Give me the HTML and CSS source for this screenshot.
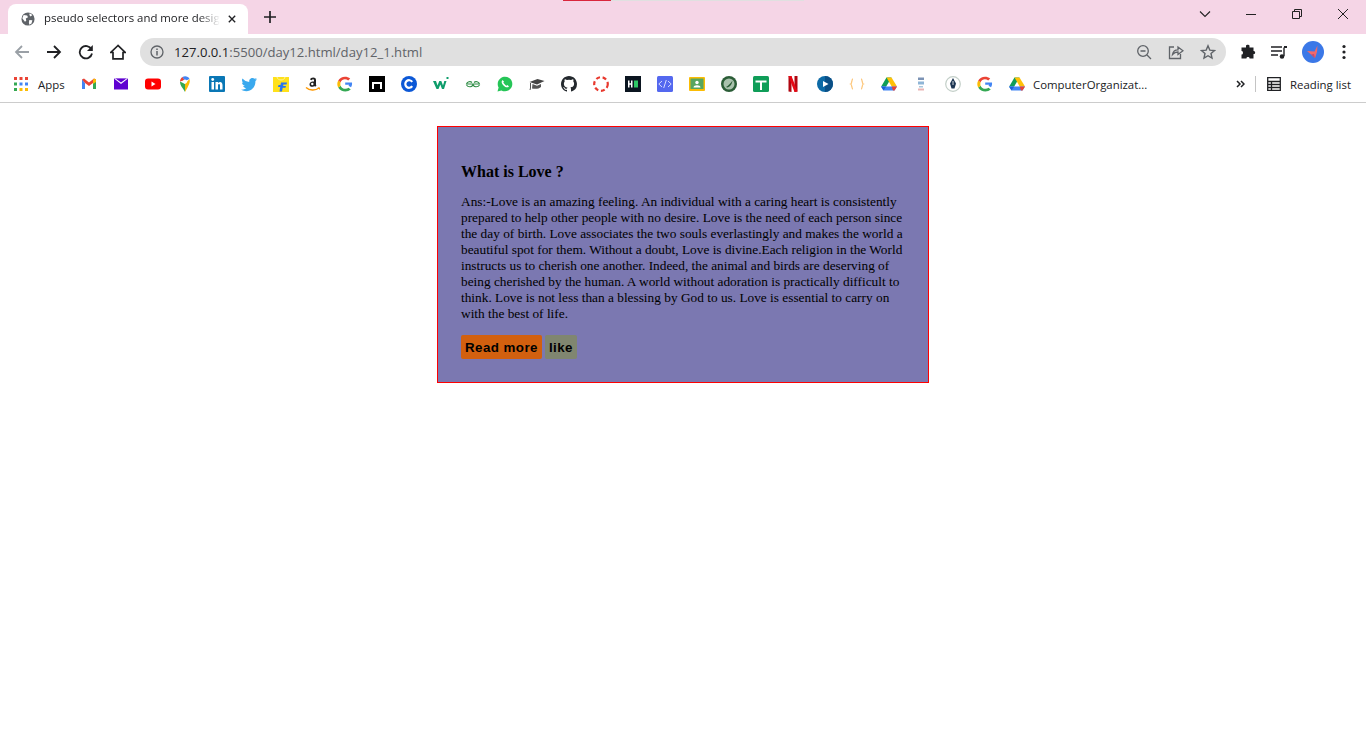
FILE: index.html
```html
<!DOCTYPE html>
<html lang="en">
<head>
<meta charset="UTF-8" />
<meta name="viewport" content="width=device-width, initial-scale=1" />
<title>pseudo selectors and more design</title>
<link rel="stylesheet" href="styles.css">
</head>
<body>
  <div class="browser">
    <div class="tabstrip">
      <span class="load-red"></span><span class="load-gray"></span>
      <div class="tab">
        <svg class="tab-globe" viewBox="0 0 16 16"><circle cx="8" cy="8" r="7.500" fill="#5f6368"/><path d="M3 3.500 7 4 8 6 5.500 7.500 6 10 4.500 11 1.500 7ZM9.500 9 13 9.500 12 13 9.500 14.500 9 12ZM10 1.500 13 3.500 11 5 9.500 3.500Z" fill="#fff"/></svg>
        <span class="tab-title">pseudo selectors and more desig</span>
        <svg class="tab-close" viewBox="0 0 10 10"><path d="M1 1 9 9M9 1 1 9" stroke="#202124" stroke-width="1.700"/></svg>
      </div>
      <svg class="new-tab" viewBox="0 0 12 12"><path d="M6 0V12M0 6H12" stroke="#202124" stroke-width="1.700"/></svg>
      <div class="window-controls">
        <svg class="win-chevron" viewBox="0 0 12 7"><path d="M1 .5 6 5.500 11 .5" fill="none" stroke="#222" stroke-width="1.100"/></svg>
        <svg class="win-btn" viewBox="0 0 12 12"><path d="M1 6.500H11" stroke="#222" stroke-width="1"/></svg>
        <svg class="win-btn" viewBox="0 0 12 12"><path d="M1.500 3.500H8.500V10.500H1.500ZM3.500 3.500V1.500H10.500V8.500H8.500" fill="none" stroke="#222" stroke-width="1"/></svg>
        <svg class="win-btn" viewBox="0 0 12 12"><path d="M1 1 11 11M11 1 1 11" stroke="#222" stroke-width="1"/></svg>
      </div>
    </div>

    <div class="toolbar">
      <svg class="tool-icon" viewBox="0 0 16 16"><path d="M15 8H2M8 2 2 8 8 14" fill="none" stroke="#9aa0a6" stroke-width="1.800"/></svg>
      <svg class="tool-icon" viewBox="0 0 16 16"><path d="M1 8H14M8 2 14 8 8 14" fill="none" stroke="#202124" stroke-width="1.800"/></svg>
      <svg class="tool-icon" viewBox="0 0 16 16"><path d="M13.500 5.500A6.200 6.200 0 1 0 14 9.500" fill="none" stroke="#202124" stroke-width="1.800"/><path d="M14.800 1V7H9Z" fill="#202124"/></svg>
      <svg class="tool-icon" viewBox="0 0 16 16"><path d="M8 1.500 .8 8.500H3V14.800H13V8.500H15.200Z" fill="none" stroke="#202124" stroke-width="1.700"/></svg>
      <div class="omnibox">
        <svg class="omni-info" viewBox="0 0 14 14"><circle cx="7" cy="7" r="6" fill="none" stroke="#5f6368" stroke-width="1.300"/><path d="M7 6V10.500M7 3.500V5" stroke="#5f6368" stroke-width="1.500"/></svg>
        <span class="url"><span class="url-host">127.0.0.1</span>:5500/day12.html/day12_1.html</span>
        <svg class="omni-icon" viewBox="0 0 16 16"><circle cx="7" cy="7" r="5.300" fill="none" stroke="#5f6368" stroke-width="1.300"/><path d="M4.500 7H9.500M11 11 15 15" stroke="#5f6368" stroke-width="1.300"/></svg>
        <svg class="omni-icon" viewBox="0 0 16 16"><path d="M6 3H1.500V14.500H12.500V10" fill="none" stroke="#5f6368" stroke-width="1.300"/><path d="M4.500 10.500C5 7.500 7 5.800 10 5.800V3L15 6.800 10 10.500V8C8 8 6 8.800 4.500 10.500Z" fill="none" stroke="#5f6368" stroke-width="1.300"/></svg>
        <svg class="omni-icon" viewBox="0 0 16 16"><path d="M8 1.800 9.800 6.100 14.500 6.500 11 9.500 12 14.100 8 11.700 4 14.100 5 9.500 1.500 6.500 6.200 6.100Z" fill="none" stroke="#5f6368" stroke-width="1.400"/></svg>
      </div>
      <div class="toolbar-right">
        <svg class="tool-icon" viewBox="0 0 16 16"><path d="M6 1.500C6.500 .5 9 .5 9.500 1.500V3.500H13.500V7C15.500 6.500 16 10.500 13.500 10V14.500H9.500C10 12.500 6 12.500 6.500 14.500H1.500V10.500C3.500 11 3.500 6.500 1.500 7V3.500H6Z" fill="#202124"/></svg>
        <svg class="tool-icon" viewBox="0 0 16 16"><path d="M0 3H11M0 7H11M0 11H7" stroke="#202124" stroke-width="1.400"/><path d="M13 3.500V12" stroke="#202124" stroke-width="1.400"/><path d="M13 2H16V4H13Z" fill="#202124"/><circle cx="11" cy="12.500" r="2.300" fill="#202124"/></svg>
        <svg class="avatar" viewBox="0 0 22 22"><circle cx="11" cy="11" r="11" fill="#3b78e7"/><path d="M15.500 4.500 12.500 10.500 5 10 9 13.500 11 15.500 13 17 15 11Z" fill="#f0696b"/><path d="M9 13.500 12 13 13 17 11 15.500Z" fill="#b84f78"/></svg>
        <svg class="tool-icon menu-dots" viewBox="0 0 16 16"><circle cx="8" cy="2.500" r="1.600" fill="#202124"/><circle cx="8" cy="8" r="1.600" fill="#202124"/><circle cx="8" cy="13.500" r="1.600" fill="#202124"/></svg>
      </div>
    </div>

    <div class="bookmarks">
      <svg class="apps-grid" viewBox="0 0 14 14">
        <path d="M0 0H3V3H0Z" fill="#ea4335"/><path d="M5.500 0H8.500V3H5.500Z" fill="#ea4335"/><path d="M11 0H14V3H11Z" fill="#ea4335"/>
        <path d="M0 5.500H3V8.500H0Z" fill="#34a853"/><path d="M5.500 5.500H8.500V8.500H5.500Z" fill="#4285f4"/><path d="M11 5.500H14V8.500H11Z" fill="#4285f4"/>
        <path d="M0 11H3V14H0Z" fill="#34a853"/><path d="M5.500 11H8.500V14H5.500Z" fill="#fbbc05"/><path d="M11 11H14V14H11Z" fill="#fbbc05"/>
      </svg>
      <span class="bm-label apps-label">Apps</span>
      <div class="bm-icons">
        <!-- gmail -->
        <svg class="bm" viewBox="0 0 16 16"><path d="M1 3V13H4V7Z" fill="#4285f4"/><path d="M15 3V13H12V7Z" fill="#34a853"/><path d="M1 3.500 3 2.500 8 6.500 13 2.500 15 3.500 12 7 8 10 4 7Z" fill="#ea4335"/><path d="M13 2.500 15 3.500V6L12 8V4Z" fill="#fbbc05"/></svg>
        <!-- yahoo mail -->
        <svg class="bm" viewBox="0 0 16 16"><path d="M1 2.500H15V13.500H1Z" fill="#5f01d1"/><path d="M1 2.500H15L8 8Z" fill="#fff"/><path d="M2.500 2.500H13.500L8 6.500Z" fill="#5f01d1"/></svg>
        <!-- youtube -->
        <svg class="bm" viewBox="0 0 16 16"><rect y="2.500" width="16" height="11" rx="3" fill="#f00"/><path d="M6.500 5.500V10.500L10.500 8Z" fill="#fff"/></svg>
        <!-- maps -->
        <svg class="bm" viewBox="0 0 16 16"><path d="M8 16C6 12 3 10 3 5.500L8 8Z" fill="#34a853"/><path d="M3 5.500C3 3.500 4 2 5.500 1L8 4Z" fill="#ea4335"/><path d="M5.500 1C8 -.5 11.500 .5 12.500 3L8 5Z" fill="#4285f4"/><path d="M12.500 3C13.500 6 12 9 8 16L8 8Z" fill="#fbbc05"/><circle cx="8" cy="5.500" r="2" fill="#fff"/></svg>
        <!-- linkedin -->
        <svg class="bm" viewBox="0 0 16 16"><rect width="16" height="16" rx="1" fill="#0a77b5"/><path d="M2.500 6H5V13.500H2.500ZM6.500 6H9V7C10.500 5.300 13.500 5.500 13.500 9V13.500H11V9.500C11 7.500 9 7.500 9 9.500V13.500H6.500Z" fill="#fff"/><circle cx="3.700" cy="3.500" r="1.400" fill="#fff"/></svg>
        <!-- twitter -->
        <svg class="bm" viewBox="0 0 16 16"><path d="M16 3.200C15.400 3.500 14.800 3.600 14.200 3.700 14.900 3.300 15.400 2.700 15.600 1.900 15 2.300 14.300 2.500 13.600 2.700 12.200 1.300 9.500 1.800 8.600 3.600 8.200 4.400 8.100 5.200 8.300 5.900 5.600 5.800 3.200 4.500 1.500 2.500.6 4 1 5.900 2.500 6.900 2 6.900 1.500 6.700 1 6.500 1 8 2.100 9.500 3.700 9.800 3.200 10 2.700 10 2.200 9.900 2.600 11.200 3.900 12.100 5.300 12.100 3.800 13.300 2 13.800 0 13.600 6.400 17.600 14.800 13.600 14.400 4.900 15 4.500 15.600 3.900 16 3.200Z" fill="#3aa9ee"/></svg>
        <!-- flipkart -->
        <svg class="bm" viewBox="0 0 16 16"><path d="M0 1H16V16H0Z" fill="#ffe11b"/><path d="M4 1C4.500 5 11.500 5 12 1" fill="none" stroke="#fff3a0" stroke-width="1"/><path d="M8 6.500H14L13.500 8.500H10.500L10.100 10H13L12.500 11.800H9.700L9 15.500H6.500L7.200 11H5L5.500 9H7.500Z" fill="#2874f0"/></svg>
        <!-- amazon -->
        <svg class="bm" viewBox="0 0 16 16"><path d="M5 3.500C5.500 1 11 .5 11 4V8.500C11 9.500 11.500 9.800 11.500 9.800L10 10.800 9.300 10C7.500 11.500 4.500 11 4.500 8.500 4.500 6 7 5.500 9 5.500V4C9 3 7.200 2.800 6.800 4.200Z" fill="#222"/><circle cx="7.300" cy="8" r="1.200" fill="#fff"/><path d="M1 11.500C4.500 14.500 10 15 14 12" fill="none" stroke="#f90" stroke-width="1.400"/><path d="M12.500 11.500H15V14Z" fill="#f90"/></svg>
        <!-- google -->
        <svg class="bm" viewBox="0 0 16 16"><path d="M8.200 6.500H15C15.200 8 15 9.800 14 11.200L11.500 9.800C11.800 9.400 12 9 12 8.700H8.200Z" fill="#4285f4"/><path d="M3.600 9.700C4.500 12.800 9 13.800 11.500 11.800L13.800 13.500C10.100 16.700 3.500 15.800 1.200 11.500Z" fill="#34a853"/><path d="M1.200 4.500 3.600 6.300C3.200 7.500 3.200 8.500 3.600 9.700L1.200 11.500C0 9.300 0 6.700 1.200 4.500Z" fill="#fbbc05"/><path d="M1.200 4.500C3.500 .3 9.500 -.6 13.200 2.600L11.200 4.600C8.800 2.500 4.800 3.100 3.600 6.300Z" fill="#ea4335"/></svg>
        <!-- black tile -->
        <svg class="bm" viewBox="0 0 16 16"><rect width="16" height="16" fill="#000"/><path d="M3 13V6H13V13H11V8H5V13Z" fill="#fff"/></svg>
        <!-- blue C -->
        <svg class="bm" viewBox="0 0 16 16"><circle cx="8" cy="8" r="8" fill="#0c58d6"/><path d="M11.200 10.200A3.800 3.800 0 1 1 11.200 5.800" fill="none" stroke="#fff" stroke-width="2.200"/></svg>
        <!-- w3 -->
        <svg class="bm" viewBox="0 0 16 16"><path d="M0 5H3L4.500 9.500 6.300 5H8.300L10 9.500 11.300 5H13.500L11 13H9L7.300 8.500 5.500 13H3.500Z" fill="#0f9d6b"/><path d="M13.500 1H15.500V3H13.500Z" fill="#0f9d6b"/></svg>
        <!-- geeksforgeeks -->
        <svg class="bm" viewBox="0 0 16 16"><path d="M8 8H14.500C14 5.500 10.500 5 9 6.500M8 8H1.500C2 5.500 5.500 5 7 6.500M8 8C8 11.500 13 11.500 14.500 9M8 8C8 11.500 3 11.500 1.500 9" fill="none" stroke="#2f8d46" stroke-width="1.100"/></svg>
        <!-- whatsapp -->
        <svg class="bm" viewBox="0 0 16 16"><path d="M.5 15.500 1.600 11.500A7.300 7.300 0 1 1 4.500 14.400Z" fill="#25c557"/><path d="M5.500 4C4 5.500 4.500 7.500 6.500 9.500 8.500 11.500 10.500 12 12 10.500L10.500 9 9.500 9.800C8.500 9.300 6.700 7.500 6.300 6.500L7 5.500Z" fill="#fff"/></svg>
        <!-- grad cap -->
        <svg class="bm" viewBox="0 0 16 16"><path d="M.5 6 8.500 3 15.500 5 8 8.500Z" fill="#444"/><path d="M3.500 8 8 9.800 12 8V11C10 13 6 13 3 12.500Z" fill="#555"/><path d="M1.500 7V12L1 14" fill="none" stroke="#555" stroke-width="1"/></svg>
        <!-- github -->
        <svg class="bm" viewBox="0 0 16 16"><path d="M8 0C3.600 0 0 3.600 0 8c0 3.500 2.300 6.500 5.500 7.600.4.100.5-.2.500-.4v-1.400c-2.200.5-2.700-1-2.700-1-.4-.9-.9-1.200-.9-1.200-.7-.5.100-.5.100-.5.800.100 1.200.8 1.200.8.700 1.200 1.900.9 2.300.7.100-.5.300-.9.500-1.100-1.800-.2-3.600-.9-3.600-4 0-.9.300-1.600.8-2.100-.1-.2-.4-1 .1-2.100 0 0 .7-.2 2.200.8a7.600 7.600 0 0 1 4 0c1.500-1 2.200-.8 2.200-.8.400 1.100.2 1.900.1 2.100.5.600.8 1.300.8 2.100 0 3.100-1.900 3.700-3.700 3.900.3.300.6.700.6 1.500v2.200c0 .2.100.5.600.4A8 8 0 0 0 16 8c0-4.400-3.600-8-8-8Z" fill="#24292e"/></svg>
        <!-- dashed ring -->
        <svg class="bm" viewBox="0 0 16 16"><circle cx="8" cy="8" r="6.800" fill="none" stroke="#e8392e" stroke-width="2.200" stroke-dasharray="4 2.700"/></svg>
        <!-- dark H tile -->
        <svg class="bm" viewBox="0 0 16 16"><rect width="16" height="16" fill="#0b1520"/><path d="M3 4.500H4.500V7.200H6V4.500H7.500V11.500H6V8.700H4.500V11.500H3Z" fill="#fff"/><path d="M9 4.500H13V11.500H9Z" fill="#2ec866"/></svg>
        <!-- code tile -->
        <svg class="bm" viewBox="0 0 16 16"><rect width="16" height="16" rx="1.500" fill="#5468ef"/><path d="M5 5 1.800 8 5 11M11 5 14.200 8 11 11M9.300 4 6.700 12" fill="none" stroke="#d6dcff" stroke-width="1"/></svg>
        <!-- classroom -->
        <svg class="bm" viewBox="0 0 16 16"><rect y="1" width="16" height="14" rx="1" fill="#fbbc05"/><rect x="1.500" y="2.500" width="13" height="10.500" fill="#57a55f"/><circle cx="8" cy="6.500" r="1.700" fill="#fff"/><path d="M4.500 11.500C4.500 8.500 11.500 8.500 11.500 11.500Z" fill="#fff"/></svg>
        <!-- round seal -->
        <svg class="bm" viewBox="0 0 16 16"><circle cx="8" cy="8" r="8" fill="#2b5d37"/><circle cx="8" cy="8" r="5.500" fill="#a9c2ad"/><path d="M5 11C7 10 10 7 11.500 4.500 11 8 9.500 10.500 6.500 11.500Z" fill="#2b5d37"/></svg>
        <!-- green tile -->
        <svg class="bm" viewBox="0 0 16 16"><rect width="16" height="16" rx="1.500" fill="#0f9d58"/><path d="M2.500 4.500H13.500V6.500H9V14H7V6.500H2.500Z" fill="#fff"/></svg>
        <!-- netflix -->
        <svg class="bm" viewBox="0 0 16 16"><path d="M3.500 0H6.500V16L3.500 15.500Z" fill="#b00610"/><path d="M9.500 0H12.500V15.500L9.500 16Z" fill="#b00610"/><path d="M3.500 0H6.500L12.500 15.500 9.500 16Z" fill="#e50914"/></svg>
        <!-- play circle -->
        <svg class="bm" viewBox="0 0 16 16"><circle cx="8" cy="8" r="8" fill="#0c6aa6"/><path d="M8 0A8 8 0 0 1 8 16Z" fill="#0a4f86"/><path d="M6 5 11.500 8 6 11Z" fill="#fff"/></svg>
        <!-- braces -->
        <svg class="bm" viewBox="0 0 16 16"><path d="M4 3C2.500 3 3 7.500 1.800 8 3 8.500 2.500 13 4 13M12 3C13.500 3 13 7.500 14.200 8 13 8.500 13.500 13 12 13" fill="none" stroke="#fdc77c" stroke-width="1.300"/></svg>
        <!-- drive -->
        <svg class="bm" viewBox="0 0 16 16"><path d="M5.500 1.500H10.500L5.200 10.500H.2Z" fill="#0f9d58"/><path d="M10.500 1.500 16 10.500H10.700L5.500 1.500Z" fill="#ffc107"/><path d="M0 10.500H16L13.500 14.500H2.500Z" fill="#4285f4"/><path d="M0 10.500H5.200L2.500 14.500Z" fill="#1a62d6"/><path d="M10.700 10.500H16L13.500 14.500H12Z" fill="#ea4335"/></svg>
        <!-- pale stacked -->
        <svg class="bm" viewBox="0 0 16 16"><path d="M5 1.500H11V4H5Z" fill="#7c93b5"/><path d="M5 5.500H11V8.500H5Z" fill="#8fb5d6"/><path d="M6 10H10V11.500H6Z" fill="#a8c6dc"/><path d="M5 12.500H11V14.500H5Z" fill="#e8b4b4"/></svg>
        <!-- nib seal -->
        <svg class="bm" viewBox="0 0 16 16"><circle cx="8" cy="8" r="7.300" fill="#fff" stroke="#c3cfc8" stroke-width="1.200"/><path d="M8 2 11 7.500 9.500 12.500H6.500L5 7.500Z" fill="#1c3552"/><path d="M8 5V9" stroke="#fff" stroke-width=".8"/></svg>
        <!-- google -->
        <svg class="bm" viewBox="0 0 16 16"><path d="M8.200 6.500H15C15.200 8 15 9.800 14 11.200L11.500 9.800C11.800 9.400 12 9 12 8.700H8.200Z" fill="#4285f4"/><path d="M3.600 9.700C4.500 12.800 9 13.800 11.500 11.800L13.800 13.500C10.100 16.700 3.500 15.800 1.200 11.500Z" fill="#34a853"/><path d="M1.200 4.500 3.600 6.300C3.200 7.500 3.200 8.500 3.600 9.700L1.200 11.500C0 9.300 0 6.700 1.200 4.500Z" fill="#fbbc05"/><path d="M1.200 4.500C3.500 .3 9.500 -.6 13.200 2.600L11.200 4.600C8.800 2.500 4.800 3.100 3.600 6.300Z" fill="#ea4335"/></svg>
        <!-- drive -->
        <svg class="bm" viewBox="0 0 16 16"><path d="M5.500 1.500H10.500L5.200 10.500H.2Z" fill="#0f9d58"/><path d="M10.500 1.500 16 10.500H10.700L5.500 1.500Z" fill="#ffc107"/><path d="M0 10.500H16L13.500 14.500H2.500Z" fill="#4285f4"/><path d="M0 10.500H5.200L2.500 14.500Z" fill="#1a62d6"/><path d="M10.700 10.500H16L13.500 14.500H12Z" fill="#ea4335"/></svg>
      </div>
      <span class="bm-label bm-folder">ComputerOrganizat...</span>
      <div class="bm-right">
        <svg class="bm-more" viewBox="0 0 9 8"><path d="M1 1 4 4 1 7M5 1 8 4 5 7" fill="none" stroke="#202124" stroke-width="1.500"/></svg>
        <span class="bm-sep"></span>
        <svg class="reading-icon" viewBox="0 0 14 14"><path d="M.700.700H13.300V13.300H.700ZM.700 4.500H13.300M.700 7.500H13.300M.700 10.500H13.300M4.500 4.500V13.300" fill="none" stroke="#202124" stroke-width="1.300"/></svg>
        <span class="bm-label reading-label">Reading list</span>
      </div>
    </div>
  </div>

  <main class="page">
    <div class="card">
      <h3 class="card-title">What is Love ?</h3>
      <p class="card-text">Ans:-Love is an amazing feeling. An individual with a caring heart is consistently prepared to help other people with no desire. Love is the need of each person since the day of birth. Love associates the two souls everlastingly and makes the world a beautiful spot for them. Without a doubt, Love is divine.Each religion in the World instructs us to cherish one another. Indeed, the animal and birds are deserving of being cherished by the human. A world without adoration is practically difficult to think. Love is not less than a blessing by God to us. Love is essential to carry on with the best of life.</p>
      <div class="card-actions">
        <a class="btn btn-read">Read more</a>
        <a class="btn btn-like">like</a>
      </div>
    </div>
  </main>
</body>
</html>
```

FILE: styles.css
```css
html, body {
  margin: 0;
  padding: 0;
  background: #fff;
}
body {
  height: 756px;
  overflow: hidden;
  display: flex;
  flex-direction: column;
}
svg {
  display: block;
  flex: none;
}

/* browser chrome */
.browser {
  font-family: "Open Sans", "Noto Sans", sans-serif;
  color: #202124;
}
.tabstrip {
  position: relative;
  height: 34px;
  background: #f5d5e6;
  display: flex;
  align-items: flex-end;
  padding-left: 8px;
}
.load-red {
  position: absolute;
  left: 563px;
  top: 0;
  width: 48px;
  height: 1px;
  background: #d9263c;
}
.load-gray {
  position: absolute;
  left: 611px;
  top: 0;
  width: 193px;
  height: 1px;
  background: #e0e0e0;
}
.tab {
  width: 240px;
  height: 30px;
  box-sizing: border-box;
  background: #fff;
  border-radius: 8px 8px 0 0;
  display: flex;
  align-items: center;
  padding: 0 0 0 13px;
}
.tab-globe {
  width: 14px;
  height: 14px;
  margin-top: -1px;
}
.tab-title {
  width: 178px;
  margin-left: 9px;
  font-size: 11.4px;
  line-height: 16px;
  margin-top: -3px;
  white-space: nowrap;
  -webkit-mask-image: linear-gradient(to right, #000 155px, transparent 176px);
  mask-image: linear-gradient(to right, #000 155px, transparent 176px);
}
.tab-close {
  width: 8px;
  height: 8px;
  margin-left: 6px;
  margin-top: -1px;
}
.new-tab {
  width: 12px;
  height: 12px;
  margin: 0 0 11px 16px;
}
.window-controls {
  margin-left: auto;
  align-self: flex-start;
  display: flex;
  align-items: center;
  height: 28px;
}
.win-chevron {
  width: 12px;
  height: 7px;
  margin-right: 34px;
}
.win-btn {
  width: 12px;
  height: 12px;
  margin-right: 34px;
}
.win-btn:last-child {
  margin-right: 17px;
}

.toolbar {
  height: 36px;
  background: #fff;
  display: flex;
  align-items: center;
  padding-left: 14px;
  gap: 16px;
}
.tool-icon {
  width: 16px;
  height: 16px;
}
.omnibox {
  width: 1086px;
  height: 28px;
  margin-left: -2px;
  background: #e0e0e0;
  border-radius: 14px;
  display: flex;
  align-items: center;
  padding: 0 10px;
  box-sizing: border-box;
}
.omni-info {
  width: 14px;
  height: 14px;
  margin-right: 10px;
}
.url {
  font-size: 13.1px;
  color: #5f6368;
  margin-right: auto;
  white-space: nowrap;
}
.url-host {
  color: #202124;
}
.omni-icon {
  width: 16px;
  height: 16px;
  margin-left: 16px;
}
.toolbar-right {
  display: flex;
  align-items: center;
  gap: 15px;
  margin-left: -2px;
}
.avatar {
  width: 22px;
  height: 22px;
}
.menu-dots {
  margin-left: -3px;
}

.bookmarks {
  height: 28px;
  padding: 0 0 4px 14px;
  background: #fff;
  border-bottom: 1px solid #ccc;
  display: flex;
  align-items: center;
}
.apps-grid {
  width: 14px;
  height: 14px;
}
.bm-label {
  font-size: 11.4px;
  white-space: nowrap;
}
.apps-label {
  margin-left: 10px;
  width: 43px;
}
.bm-icons {
  display: flex;
  gap: 16px;
}
.bm {
  width: 16px;
  height: 16px;
}
.bm-folder {
  margin-left: 8px;
}
.bm-right {
  margin-left: auto;
  display: flex;
  align-items: center;
}
.bm-more {
  width: 9px;
  height: 8px;
}
.bm-sep {
  width: 1px;
  height: 16px;
  background: #c4c4c4;
  margin: 0 11px 0 10px;
}
.reading-icon {
  width: 14px;
  height: 14px;
}
.reading-label {
  margin: 0 15px 0 9px;
}

/* page */
.page {
  flex: 1;
  display: flex;
  justify-content: center;
  padding-top: 23px;
}
.card {
  width: 492px;
  height: 257px;
  box-sizing: border-box;
  background: #7b78b1;
  border: 1px solid #f00;
  padding: 36px 23px 0;
  font-family: "Liberation Serif", serif;
  color: #000;
}
.card-title {
  font-size: 16px;
  line-height: 18px;
  font-weight: bold;
  margin: 0;
}
.card-text {
  font-size: 13.33px;
  line-height: 16px;
  margin: 13px 0 13px;
}
.card-actions {
  display: flex;
  gap: 3px;
}
.btn {
  height: 24px;
  line-height: 25px;
  padding: 0 4px;
  border-radius: 2px;
  font-family: "Liberation Sans", sans-serif;
  font-size: 13.33px;
  font-weight: bold;
  letter-spacing: .45px;
}
.btn-read {
  background: #d2600f;
}
.btn-like {
  background: #808670;
}
```
